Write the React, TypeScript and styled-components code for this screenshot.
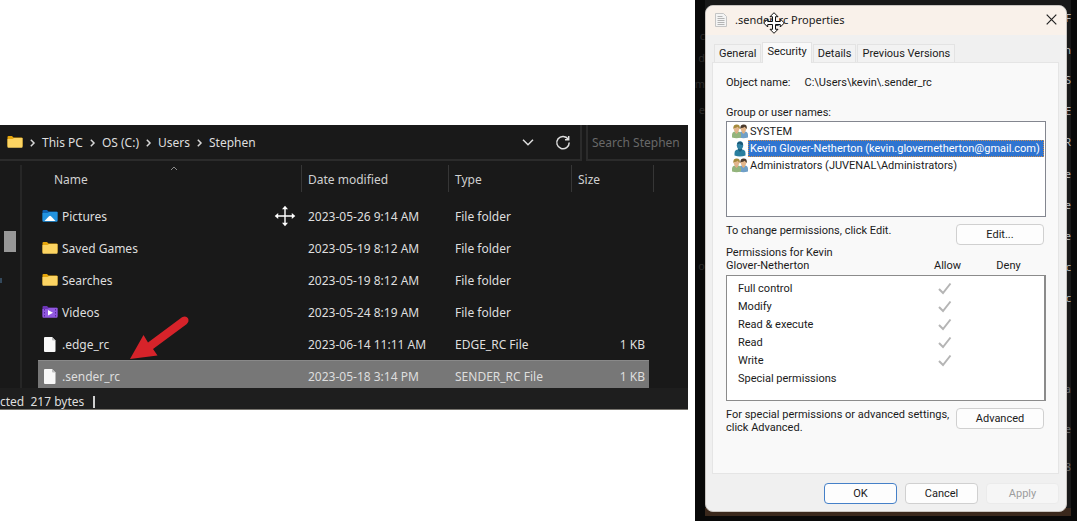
import React from 'react';
import styled, { createGlobalStyle, css } from 'styled-components';

const GlobalStyle = createGlobalStyle`
  *, *::before, *::after { box-sizing: border-box; }
  body { margin: 0; background: #fff; }
  button, input { font: inherit; }
`;

const Page = styled.main`
  display: flex;
  align-items: flex-start;
  gap: 7px;
  min-height: 100vh;
`;

/* ---------- File explorer ---------- */

const Explorer = styled.section`
  position: relative;
  flex: 1;
  min-width: 0;
  margin-top: 125px;
  overflow: hidden;
  background: #191919;
  border-bottom: 1px solid #77746e;
  color: #dedede;
  font: 12px/16px 'Noto Sans', 'Open Sans', sans-serif;
`;

const AddressRow = styled.div`
  display: flex;
  gap: 4px;
  height: 36px;
`;

const AddressBar = styled.div`
  display: flex;
  flex: 1;
  align-items: center;
  padding: 2px 9px 0 7px;
  border: solid #2b2b2b;
  border-width: 0 2px 2px 0;
`;

const Crumbs = styled.nav`
  display: flex;
  flex: 1;
  align-items: center;
  gap: 6px;
`;

const Crumb = styled.a`
  color: inherit;
  text-decoration: none;
`;

const AddressActions = styled.div`
  display: flex;
  gap: 19px;
`;

const GlyphButton = styled.button`
  display: flex;
  align-items: center;
  justify-content: center;
  width: 16px;
  height: 16px;
  padding: 0;
  border: 0;
  background: none;
  color: #dedede;
`;

const Search = styled.input`
  width: 102px;
  min-width: 0;
  padding: 2px 0 0 4px;
  border: solid #2b2b2b;
  border-width: 0 0 2px 2px;
  border-radius: 0;
  background: none;
  color: #dedede;
  outline: 0;
  &::placeholder { color: #686868; opacity: 1; }
`;

const ExplorerBody = styled.div`
  display: flex;
  padding-top: 4px;
`;

const NavPane = styled.div`
  display: flex;
  flex-direction: column;
  align-items: flex-start;
  width: 22px;
  margin-right: 16px;
  padding-top: 66px;
  border-right: 2px solid #262626;
`;

const ScrollThumb = styled.div`
  width: 12px;
  height: 21px;
  margin-left: 4px;
  background: #989898;
`;

const NavIconEdge = styled.div`
  width: 2px;
  height: 5px;
  margin-top: 26px;
  background: #34495c;
`;

const Files = styled.table`
  flex: 1;
  width: 100%;
  min-width: 0;
  margin-bottom: -4px;
  border-spacing: 0;
  table-layout: fixed;
`;

const Col = styled.col<{ $width?: number }>`
  width: ${p => (p.$width ? `${p.$width}px` : 'auto')};
`;

const HeadCell = styled.th<{ $first?: boolean }>`
  position: relative;
  height: 27px;
  padding: 2px 0 0 ${p => (p.$first ? 16 : 6)}px;
  border-left: ${p => (p.$first ? '0' : '1px solid #363636')};
  color: #d0d0d0;
  font-weight: 400;
  text-align: left;
`;

const SortMark = styled.svg`
  position: absolute;
  top: 0;
  left: 132px;
`;

const Spacer = styled.tr`
  height: 8px;
`;

const FileRow = styled.tr<{ $selected?: boolean }>`
  height: 32px;
  td { padding: 1px 0 0 7px; white-space: nowrap; }
  td:first-child { padding-left: 4px; }
  td:nth-child(4) {
    padding-right: 4px;
    border-right: 4px solid transparent;
    background-clip: padding-box;
    text-align: right;
  }
  ${p => p.$selected && css`
    td:not(:last-child) {
      background-color: #777;
      box-shadow: inset 0 1px #898989;
    }
  `}
`;

const FileName = styled.span`
  display: flex;
  align-items: center;
  gap: 4px;
`;

const StatusBar = styled.footer`
  position: relative;
  display: flex;
  gap: 9px;
  align-items: center;
  height: 21px;
  padding-top: 6px;
  background: #1e1e1e;
`;

const StatusText = styled.span`
  white-space: pre;
`;

const StatusRule = styled.span`
  width: 2px;
  height: 12px;
  background: #cfcfcf;
`;

const RedArrow = styled.svg`
  position: absolute;
  top: 189px;
  left: 128px;
`;

const Pointer = styled.svg<{ $x: number; $y: number }>`
  position: absolute;
  left: ${p => p.$x}px;
  top: ${p => p.$y}px;
`;

/* ---------- Properties dialog ---------- */

const Backdrop = styled.section`
  position: relative;
  display: flex;
  width: 382px;
  flex: none;
  min-height: 100vh;
  padding: 0 6px 5px 10px;
  background: #090909;
`;

const DesktopStrip = styled.div`
  position: relative;
  flex: 1;
  padding: 5px 4px 4px 0;
  background: linear-gradient(#3a281c, #3a281c) bottom / 100% 8px no-repeat #191919;
`;

const Fringe = styled.div<{ $side: 'left' | 'right' }>`
  position: absolute;
  top: 0;
  bottom: 0;
  width: 10px;
  color: ${p => (p.$side === 'left' ? '#292929' : '#b4b4b4')};
  font: 11px/16px 'Noto Sans', sans-serif;
  ${p => (p.$side === 'left' ? 'left: 0;' : 'right: 0;')}
`;

const Fragment = styled.span<{ $y: number; $dim?: boolean }>`
  position: absolute;
  top: ${p => p.$y - 8}px;
  right: 0;
  opacity: ${p => (p.$dim ? 0.5 : 1)};
`;

const Dialog = styled.div`
  position: relative;
  display: flex;
  flex-direction: column;
  height: 100%;
  padding-bottom: 7px;
  overflow: hidden;
  border: 1px solid #c9c5c1;
  border-radius: 8px;
  background: #f0f0f0;
  color: #1b1b1b;
  font: 11px/13px Roboto, 'Liberation Sans', sans-serif;
`;

const TitleBar = styled.header`
  display: flex;
  align-items: center;
  height: 29px;
  padding: 0 7px 2px 9px;
  background: #f9f1ea;
`;

const Title = styled.h1`
  flex: 1;
  margin: 0 0 0 8px;
  font: 11px/16px 'Noto Sans', sans-serif;
`;

const CloseButton = styled(GlyphButton)`
  color: #222;
`;

const Tabs = styled.div`
  display: flex;
  align-items: flex-end;
  gap: 1px;
  height: 27px;
  padding-left: 8px;
`;

const Tab = styled.button<{ $active?: boolean }>`
  height: ${p => (p.$active ? 21 : 18)}px;
  margin-bottom: ${p => (p.$active ? -1 : 0)}px;
  padding: 0 4px ${p => (p.$active ? 2 : 0)}px;
  border: 1px solid #e3e3e3;
  border-bottom: 0;
  background: ${p => (p.$active ? '#f9f9f9' : '#f2f2f2')};
  color: inherit;
  line-height: 16px;
  white-space: nowrap;
  z-index: ${p => (p.$active ? 1 : 0)};
`;

const Panel = styled.div`
  flex: 1;
  margin: 0 7px 0 6px;
  padding: 12px 12px 0 13px;
  border: 1px solid #e5e5e5;
  background: #f9f9f9;
`;

const ObjectRow = styled.div`
  display: flex;
  gap: 14px;
  line-height: 16px;
`;

const GroupLabel = styled.div`
  margin-top: 14px;
  line-height: 16px;
`;

const UserList = styled.ul`
  height: 96px;
  margin: 0;
  padding: 1px;
  border: 1px solid #83868f;
  background: #fff;
  list-style: none;
`;

const UserItem = styled.li`
  display: flex;
  align-items: center;
  height: 17px;
  padding-left: 4px;
`;

const UserName = styled.span<{ $selected?: boolean }>`
  flex: ${p => (p.$selected ? 1 : 'none')};
  padding: 0 1px;
  border: 1px ${p => (p.$selected ? 'dotted #d08f4d' : 'solid transparent')};
  background: ${p => (p.$selected ? '#2f74d0' : 'none')};
  color: ${p => (p.$selected ? '#fff' : 'inherit')};
  line-height: 15px;
  white-space: nowrap;
`;

const ActionRow = styled.div`
  display: flex;
  justify-content: space-between;
  padding: 7px 2px 0 0;
`;

const Note = styled.p<{ $width?: number }>`
  margin: 0;
  width: ${p => (p.$width ? `${p.$width}px` : 'auto')};
`;

const Button = styled.button<{ $wide?: boolean; $primary?: boolean }>`
  width: ${p => (p.$wide ? 88 : 73)}px;
  height: 21px;
  padding: 0;
  border: 1px solid ${p => (p.$primary ? '#4580c8' : '#d0d0d0')};
  border-radius: 4px;
  background: #fdfdfd;
  color: #1b1b1b;
  line-height: 16px;
  &:disabled { border-color: #ebebeb; background: #f6f6f6; color: #9d9d9d; }
`;

const PermHead = styled.div`
  display: grid;
  grid-template-columns: 1fr 61px 75px;
  align-items: end;
  margin-top: 1px;
`;

const PermTitle = styled.span`
  width: 120px;
`;

const Center = styled.span<{ $push?: boolean }>`
  padding-left: ${p => (p.$push ? 14 : 0)}px;
  text-align: center;
`;

const PermBox = styled.div`
  height: 126px;
  margin-top: 3px;
  padding: 3px 0 0 11px;
  border: 1px solid #8b8b8b;
  border-right-width: 2px;
  background: #fff;
`;

const PermTable = styled.table`
  width: 100%;
  border-spacing: 0;
  table-layout: fixed;
  tr { height: 18px; }
  th { padding: 0; font-weight: 400; text-align: left; }
  td { padding: 0; line-height: 0; text-align: center; }
`;

const DialogFooter = styled.footer`
  display: flex;
  justify-content: flex-end;
  gap: 8px;
  padding: 9px 7px 0 0;
`;

/* ---------- Drawings ---------- */

const Chevron = () => (
  <svg width="7" height="10" viewBox="0 0 7 10" fill="none" stroke="#d6d6d6" strokeWidth="1.5" aria-hidden>
    <path d="M1.800 1.800 5 5 1.800 8.200" />
  </svg>
);

type IconKind = 'folder' | 'pictures' | 'videos' | 'file';

const FileIcon = ({ kind }: { kind: IconKind }) => {
  if (kind === 'file') {
    return (
      <svg width="16" height="16" viewBox="0 0 16 16" aria-hidden>
        <path d="M3 0h7l3.500 3.500V14q0 1-1 1H3q-1 0-1-1V1q0-1 1-1z" fill="#f8f8f8" />
        <path d="M10 0v2.500q0 1 1 1h2.500z" fill="#bdbdbd" />
      </svg>
    );
  }
  const [back, front] = {
    folder: ['#e5a50b', '#fcd462'],
    pictures: ['#0f64b4', '#2293e0'],
    videos: ['#6b35b5', '#9159e0'],
  }[kind];
  return (
    <svg width="16" height="14" viewBox="0 0 16 14" aria-hidden>
      <path d="M.5 10.500V1q0-1 1-1H5l1.500 1.500h8q1 0 1 1v8z" fill={back} />
      <path d="M.5 3h5L7 2h8.500v9q0 .8-.8.8H1.300q-.8 0-.8-.8z" fill={front} />
      {kind === 'pictures' && (
        <path d="m2.500 11 4.500-4.800q1-.9 2 0l4.500 4.800z" fill="#fff" />
      )}
      {kind === 'videos' && (
        <>
          <path d="M2.500 3v9M13.500 3v9" stroke="#5b279f" strokeDasharray="1.500 1.500" />
          <path d="M6 4v5.500l5-2.700z" fill="#fff" />
        </>
      )}
    </svg>
  );
};

const Refresh = () => (
  <svg width="16" height="16" viewBox="0 0 16 16" fill="none" stroke="currentColor" strokeWidth="1.500" aria-hidden>
    <path d="M13.200 4.200A6.200 6.200 0 1 0 14.200 7.500M13.700 1V4.700H10" />
  </svg>
);

const MovePaths = ({ outlined }: { outlined?: boolean }) => (
  <path
    d={outlined
      ? 'M11 .7 15 4.700H12.500V9.500h4.800V7L21.300 11l-4 4V12.500H12.500v4.800H15L11 21.300l-4-4h2.500V12.500H4.700V15L.7 11l4-4V9.500h4.800V4.700H7z'
      : 'M11 .7 14 4.200H11.700v6.100h6.100V8L21.300 11l-3.500 3v-2.300h-6.100v6.100H14L11 21.300l-3-3.500h2.300v-6.100H4.200V14L.7 11l3.500-3v2.300h6.100V4.200H8z'}
  />
);

const Person = ({ x, hair, shirt }: { x: number; hair: string; shirt: string }) => (
  <g transform={`translate(${x} 0)`}>
    <path d="M0 13.500V11q0-3 2.500-3.500h4Q9 8 9 11v2.500q-4.500 1.500-9 0z" fill={shirt} />
    <path d="M3 6h3v2.500L4.500 10 3 8.500z" fill="#d9ad83" />
    <ellipse cx="4.500" cy="4.500" rx="2.800" ry="3.300" fill="#e2b68c" />
    <path d="M1.300 5Q1 .6 4.700.6T7.800 5Q6.500 4 5.800 2.800 4 4 2.300 4z" fill={hair} />
  </g>
);

const UsersIcon = () => (
  <svg width="16" height="15" viewBox="0 0 16 15" aria-hidden>
    <Person x={7} hair="#4b3a2c" shirt="#6f9fc7" />
    <Person x={0} hair="#a58a3c" shirt="#93b47c" />
  </svg>
);

const UserIcon = () => (
  <svg width="16" height="16" viewBox="0 0 16 16" aria-hidden>
    <path d="M2.500 14.500v-2.300q0-3 3-3.700h5q3 .7 3 3.700v2.300q-5.500 1.800-11 0z" fill="#2a7f9f" />
    <path d="M6 6h4v3L8 11 6 9z" fill="#1c607e" />
    <ellipse cx="8" cy="4.300" rx="3.200" ry="4" fill="#3182a3" />
    <path d="M5 3Q6 .5 8.500.7T11 4Q8.500 4 7.500 2.500 6.500 3.500 5 3z" fill="#1b5674" />
  </svg>
);

const Check = () => (
  <svg width="16" height="14" viewBox="0 0 16 14" fill="none" stroke="#b5b5b5" strokeWidth="2" role="img" aria-label="Allowed">
    <path d="m2 8 4 4 7.500-9.500" />
  </svg>
);

/* ---------- Data ---------- */

const files: { name: string; date: string; type: string; size?: string; icon: IconKind; selected?: boolean }[] = [
  { name: 'Pictures', date: '2023-05-26 9:14 AM', type: 'File folder', icon: 'pictures' },
  { name: 'Saved Games', date: '2023-05-19 8:12 AM', type: 'File folder', icon: 'folder' },
  { name: 'Searches', date: '2023-05-19 8:12 AM', type: 'File folder', icon: 'folder' },
  { name: 'Videos', date: '2023-05-24 8:19 AM', type: 'File folder', icon: 'videos' },
  { name: '.edge_rc', date: '2023-06-14 11:11 AM', type: 'EDGE_RC File', size: '1 KB', icon: 'file' },
  { name: '.sender_rc', date: '2023-05-18 3:14 PM', type: 'SENDER_RC File', size: '1 KB', icon: 'file', selected: true },
];

const crumbs = ['This PC', 'OS (C:)', 'Users', 'Stephen'];
const permissions = ['Full control', 'Modify', 'Read & execute', 'Read', 'Write', 'Special permissions'];

const leftFragments: [string, number][] = [['c', 36], ['d', 58], ['m', 84], ['e', 110], ['o', 266]];
const rightFragments: [string, number, boolean?][] = [
  ['F', 18], ['n', 50], ['S', 80], ['E', 111], ['R', 142], ['e', 174], ['e', 205],
  ['e', 236], ['c', 267], ['c', 298], ['a', 389, true], ['e', 429, true], ['8', 467, true],
];

export default function App() {
  return (
    <>
      <GlobalStyle />
      <Page>
        <Explorer aria-label="File Explorer">
          <AddressRow>
            <AddressBar>
              <Crumbs aria-label="Path">
                <FileIcon kind="folder" />
                {crumbs.map(c => (
                  <React.Fragment key={c}>
                    <Chevron />
                    <Crumb href="#">{c}</Crumb>
                  </React.Fragment>
                ))}
              </Crumbs>
              <AddressActions>
                <GlyphButton aria-label="Recent locations">
                  <svg width="12" height="8" viewBox="0 0 12 8" fill="none" stroke="currentColor" strokeWidth="1.500">
                    <path d="m1 .800 5 5 5-5" />
                  </svg>
                </GlyphButton>
                <GlyphButton aria-label="Refresh"><Refresh /></GlyphButton>
              </AddressActions>
            </AddressBar>
            <Search type="text" aria-label="Search Stephen" placeholder="Search Stephen" />
          </AddressRow>

          <ExplorerBody>
            <NavPane>
              <ScrollThumb />
              <NavIconEdge />
            </NavPane>
            <Files>
              <colgroup>
                <Col />
                <Col $width={147} />
                <Col $width={123} />
                <Col $width={82} />
                <Col $width={35} />
              </colgroup>
              <thead>
                <tr>
                  <HeadCell $first>
                    Name
                    <SortMark width="8" height="6" viewBox="0 0 8 6" fill="none" stroke="#8a8a8a" aria-hidden>
                      <path d="m1 5 3-3 3 3" />
                    </SortMark>
                  </HeadCell>
                  <HeadCell>Date modified</HeadCell>
                  <HeadCell>Type</HeadCell>
                  <HeadCell>Size</HeadCell>
                  <HeadCell aria-hidden />
                </tr>
              </thead>
              <tbody>
                <Spacer aria-hidden><td colSpan={5} /></Spacer>
                {files.map(f => (
                  <FileRow key={f.name} $selected={f.selected}>
                    <td><FileName><FileIcon kind={f.icon} />{f.name}</FileName></td>
                    <td>{f.date}</td>
                    <td>{f.type}</td>
                    <td>{f.size}</td>
                    <td />
                  </FileRow>
                ))}
              </tbody>
            </Files>
          </ExplorerBody>

          <StatusBar>
            <StatusText>cted  217 bytes</StatusText>
            <StatusRule />
          </StatusBar>

          <Pointer $x={274} $y={80} width="22" height="22" viewBox="0 0 22 22" fill="#fff" aria-hidden>
            <MovePaths />
          </Pointer>
          <RedArrow width="64" height="48" viewBox="0 0 64 48" fill="#d6232a" aria-hidden>
            <path d="m2 45 13.500-24 4.500 7.500L54 3.300q4-1.800 6 .9 1.500 3.300-1.500 6L25 35l4.500 6.500z" />
          </RedArrow>
        </Explorer>

        <Backdrop>
          <Fringe $side="left" aria-hidden>
            {leftFragments.map(([t, y]) => <Fragment key={y} $y={y}>{t}</Fragment>)}
          </Fringe>
          <DesktopStrip>
            <Fringe $side="right" aria-hidden>
              {rightFragments.map(([t, y, dim]) => <Fragment key={y} $y={y} $dim={dim}>{t}</Fragment>)}
            </Fringe>
            <Dialog role="dialog" aria-label=".sender_rc Properties">
              <TitleBar>
                <svg width="12" height="14" viewBox="0 0 12 14" aria-hidden>
                  <path d="M.5.5h8l3 3v10H.5z" fill="#f4f4f4" stroke="#c5c5c5" />
                  <path d="M2.500 3.500h5M2.500 5.500h7M2.500 7.500h7M2.500 9.500h7M2.500 11.500h7" stroke="#b4b4b4" />
                </svg>
                <Title>.sender_rc Properties</Title>
                <CloseButton aria-label="Close">
                  <svg width="11" height="11" viewBox="0 0 11 11" stroke="currentColor" strokeWidth="1.200">
                    <path d="m.7.700 9.600 9.600M10.300.700.7 10.300" />
                  </svg>
                </CloseButton>
              </TitleBar>
              <Tabs role="tablist">
                <Tab role="tab">General</Tab>
                <Tab role="tab" $active aria-selected>Security</Tab>
                <Tab role="tab">Details</Tab>
                <Tab role="tab">Previous Versions</Tab>
              </Tabs>
              <Panel role="tabpanel">
                <ObjectRow>
                  <span>Object name:</span>
                  <span>C:\Users\kevin\.sender_rc</span>
                </ObjectRow>
                <GroupLabel id="users">Group or user names:</GroupLabel>
                <UserList role="listbox" aria-labelledby="users">
                  <UserItem role="option"><UsersIcon /><UserName>SYSTEM</UserName></UserItem>
                  <UserItem role="option" aria-selected>
                    <UserIcon />
                    <UserName $selected>Kevin Glover-Netherton (kevin.glovernetherton@gmail.com)</UserName>
                  </UserItem>
                  <UserItem role="option"><UsersIcon /><UserName>Administrators (JUVENAL\Administrators)</UserName></UserItem>
                </UserList>
                <ActionRow>
                  <Note>To change permissions, click Edit.</Note>
                  <Button $wide>Edit...</Button>
                </ActionRow>
                <PermHead>
                  <PermTitle id="perms">Permissions for Kevin Glover-Netherton</PermTitle>
                  <Center $push>Allow</Center>
                  <Center>Deny</Center>
                </PermHead>
                <PermBox>
                  <PermTable aria-labelledby="perms">
                    <colgroup><Col /><Col $width={50} /><Col $width={74} /></colgroup>
                    <tbody>
                      {permissions.map((p, i) => (
                        <tr key={p}>
                          <th scope="row">{p}</th>
                          <td>{i < 5 && <Check />}</td>
                          <td />
                        </tr>
                      ))}
                    </tbody>
                  </PermTable>
                </PermBox>
                <ActionRow>
                  <Note $width={228}>For special permissions or advanced settings, click Advanced.</Note>
                  <Button $wide>Advanced</Button>
                </ActionRow>
              </Panel>
              <DialogFooter>
                <Button $primary>OK</Button>
                <Button>Cancel</Button>
                <Button disabled>Apply</Button>
              </DialogFooter>
            </Dialog>
          </DesktopStrip>
          <Pointer $x={68} $y={12} width="22" height="22" viewBox="0 0 22 22" fill="#fff" stroke="#111" aria-hidden>
            <MovePaths outlined />
          </Pointer>
        </Backdrop>
      </Page>
    </>
  );
}
